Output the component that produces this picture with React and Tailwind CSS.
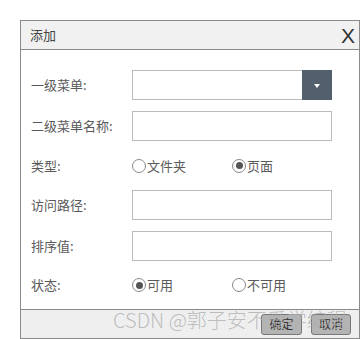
export default function App() {
  const font = { fontFamily: '"Noto Sans CJK SC", "Liberation Sans", sans-serif' };

  const Radio = ({ checked, label }) => (
    <span className="flex items-center gap-[1px]">
      <span className="flex h-[14px] w-[14px] items-center justify-center rounded-full border border-[#888] bg-white">
        {checked && <span className="h-[7px] w-[7px] rounded-full bg-[#555]" />}
      </span>
      <span>{label}</span>
    </span>
  );

  const Row = ({ label, children, h }) => (
    <div className={`flex items-center ${h}`}>
      <div className="w-[101px] shrink-0">{label}</div>
      {children}
    </div>
  );

  const Input = () => <div className="h-[30px] w-[200px] border border-[#bbb] bg-white" />;

  return (
    <div className="h-[339px] w-[360px] bg-white pl-[20px] pt-[20px]" style={font}>
      <div className="relative flex h-[319px] w-[340px] flex-col border border-[#8a8a8a] text-[13px] text-[#5a5a5a]">
        <div className="flex h-[29px] items-center justify-between border-b border-[#8a8a8a] bg-[#f1f1f1] pl-[9px] pr-[4px]">
          <span className="text-[13px] text-[#444]">添加</span>
          <span className="text-[21px] leading-none text-[#333]" style={{ fontFamily: '"Liberation Sans", sans-serif' }}>X</span>
        </div>
        <div className="flex flex-1 flex-col pl-[10px] pt-[20px]">
          <Row label="一级菜单:" h="h-[30px]">
            <div className="flex h-[30px] w-[200px] border border-[#bbb] bg-white">
              <div className="flex-1" />
              <div className="-my-[1px] -mr-[1px] flex w-[30px] items-center justify-center bg-[#525f6c]">
                <span className="mt-[2px] h-0 w-0 border-x-[3px] border-t-[4px] border-x-transparent border-t-white" />
              </div>
            </div>
          </Row>
          <div className="h-[11px]" />
          <Row label="二级菜单名称:" h="h-[30px]">
            <Input />
          </Row>
          <Row label="类型:" h="h-[49px]">
            <div className="flex">
              <div className="w-[100px]"><Radio label="文件夹" /></div>
              <Radio checked label="页面" />
            </div>
          </Row>
          <Row label="访问路径:" h="h-[30px]">
            <Input />
          </Row>
          <div className="h-[11px]" />
          <Row label="排序值:" h="h-[30px]">
            <Input />
          </Row>
          <Row label="状态:" h="h-[48px]">
            <div className="flex">
              <div className="w-[100px]"><Radio checked label="可用" /></div>
              <Radio label="不可用" />
            </div>
          </Row>
        </div>
        <div className="flex h-[29px] items-center justify-end gap-[9px] border-t border-[#8a8a8a] bg-[#efefef] pr-[8px]">
          <button className="h-[21px] w-[41px] rounded-[3px] border border-[#777] bg-[#b4b4b4] text-[12px] text-[#333]">确定</button>
          <button className="h-[21px] w-[40px] rounded-[3px] border border-[#777] bg-[#b4b4b4] text-[12px] text-[#333]">取消</button>
        </div>
        <div className="pointer-events-none absolute bottom-[8px] left-[92px] whitespace-nowrap text-[20px] leading-none font-light text-[#b0b0b0]/80">
          CSDN @郭子安不爱学编程
        </div>
      </div>
    </div>
  );
}
